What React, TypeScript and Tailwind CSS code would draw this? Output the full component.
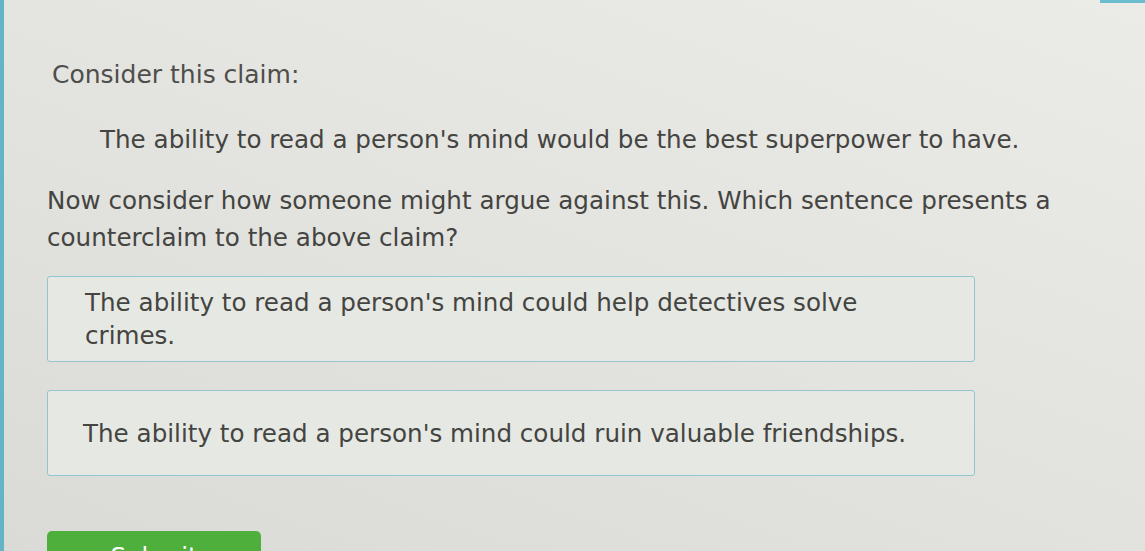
import React from "react";

export default function App() {
  return (
    <div
      className="relative w-[1145px] h-[551px] overflow-hidden bg-[linear-gradient(20deg,#dadbd6_0%,#e2e2de_45%,#ebebe8_100%)] text-[#444441]"
      style={{ fontFamily: '"DejaVu Sans", Verdana, sans-serif' }}
    >
      <div className="absolute left-0 top-0 h-full w-[4px] bg-[#62b4c6]" />
      <div className="absolute right-0 top-0 h-[3px] w-[45px] bg-[#6bbccc]" />
      <div className="flex flex-col pl-[47px] pr-[40px] pt-[56px] text-[24.6px] leading-[37px]">
        <p className="ml-[5px] text-[25px] text-[#4e4e4b]">Consider this claim:</p>
        <p className="mt-[28px] ml-[53px]">
          The ability to read a person's mind would be the best superpower to have.
        </p>
        <p className="mt-[24px]">
          Now consider how someone might argue against this. Which sentence presents a
          counterclaim to the above claim?
        </p>
        <div className="mt-[20px] flex w-[928px] flex-col gap-[28px]">
          <button className="flex h-[86px] items-center rounded-[3px] border border-[#93c4cf] bg-[#e6e8e3] px-[37px] text-left leading-[33px]">
            The ability to read a person's mind could help detectives solve crimes.
          </button>
          <button className="flex h-[86px] items-center rounded-[3px] border border-[#93c4cf] bg-[#e6e8e3] px-[35px] text-left leading-[35px]">
            The ability to read a person's mind could ruin valuable friendships.
          </button>
        </div>
        <div className="mt-[55px]">
          <button className="h-[50px] w-[214px] rounded-[5px] bg-[#4faf3c] text-white leading-[37px]">
            Submit
          </button>
        </div>
      </div>
    </div>
  );
}
